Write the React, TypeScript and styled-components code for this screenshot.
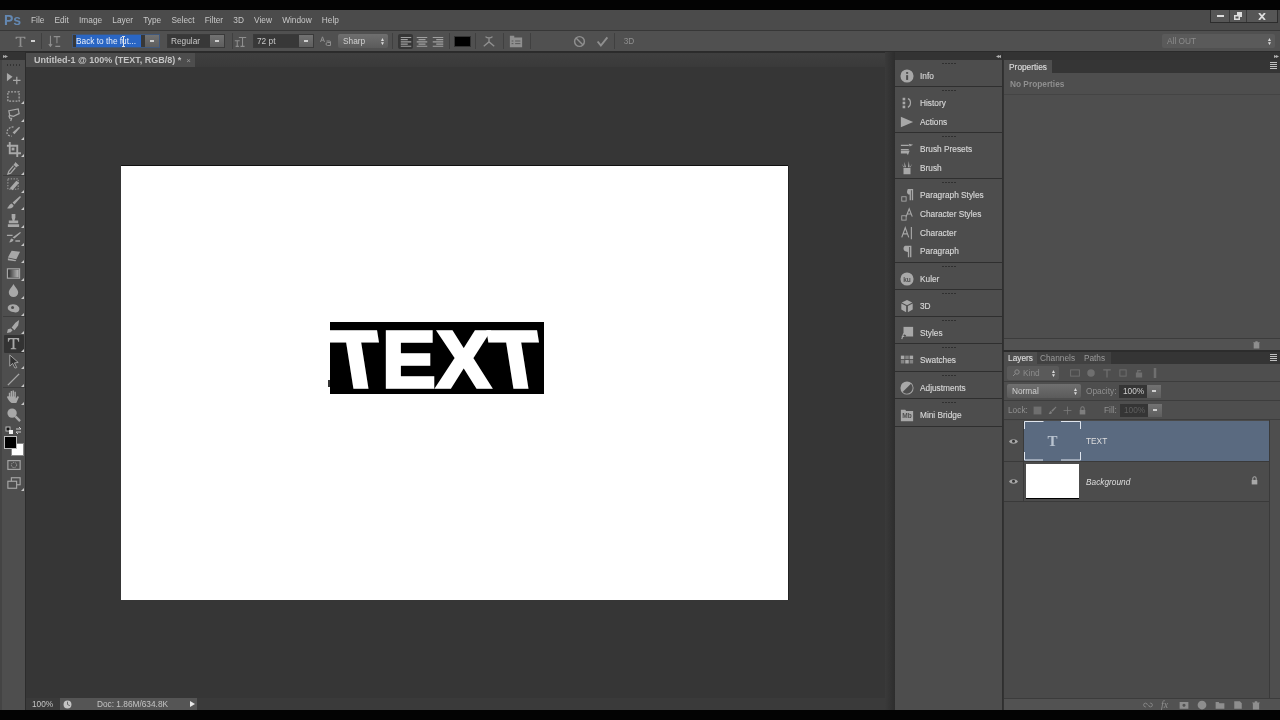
import React from "react";
import styled, { createGlobalStyle } from "styled-components";

const Global = createGlobalStyle`
  html, body { margin: 0; padding: 0; background: #000; }
  * { box-sizing: border-box; }
`;

const Page = styled.div`
  width: 1280px;
  height: 720px;
  overflow: hidden;
  display: flex;
  flex-direction: column;
  background: #000;
  font-family: "Liberation Sans", Arial, sans-serif;
  font-size: 8.3px;
  color: #cfcfcf;
  filter: blur(0.3px);
`;
const Letterbox = styled.div`
  height: 10px;
  flex: none;
  background: #030303;
`;
const MenuBar = styled.div`
  height: 20px;
  flex: none;
  display: flex;
  align-items: center;
  background: #4b4b4b;
  position: relative;
`;
const Logo = styled.div`
  width: 31px;
  padding-left: 4px;
  font-size: 14px;
  font-weight: 700;
  color: #6488b2;
`;
const MenuItems = styled.div`
  display: flex;
  gap: 10.2px;
  color: #c8c8c8;
`;
const WindowButtons = styled.div`
  position: absolute;
  right: 2px;
  top: 0;
  height: 13px;
  display: flex;
  border: 1px solid #2c2c2c;
  border-top: 0;
  background: #565656;
`;
const WindowButton = styled.div<{ $w: number }>`
  width: ${(p) => p.$w}px;
  display: flex;
  align-items: center;
  justify-content: center;
  border-left: 1px solid #3a3a3a;
  &:first-child { border-left: 0; }
`;
const OptionsBar = styled.div`
  height: 22px;
  flex: none;
  display: flex;
  align-items: center;
  background: #505050;
  border-top: 1px solid #373737;
  border-bottom: 1px solid #2b2b2b;
`;
const Slot = styled.div<{ $x: number; $w: number }>`
  flex: none;
  margin-left: ${(p) => p.$x}px;
  width: ${(p) => p.$w}px;
  height: 14px;
  display: flex;
  align-items: center;
  justify-content: center;
  color: #8f8f8f;
`;
const Sep = styled.div<{ $x: number }>`
  flex: none;
  margin-left: ${(p) => p.$x}px;
  width: 1px;
  height: 16px;
  background: #404040;
`;
const ComboBox = styled.div<{ $x: number; $w: number; $focus?: boolean }>`
  flex: none;
  margin-left: ${(p) => p.$x}px;
  width: ${(p) => p.$w}px;
  height: 14px;
  display: flex;
  position: relative;
  background: #383838;
  border: 1px solid ${(p) => (p.$focus ? "#41587a" : "#3a3a3a")};
  color: #c8c8c8;
`;
const ComboText = styled.div`
  flex: 1;
  padding-left: 3px;
  line-height: 12px;
  white-space: nowrap;
  overflow: hidden;
`;
const Selected = styled.span`
  background: #2a66c4;
  color: #e8eefa;
  display: inline-block;
  height: 12px;
  line-height: 12px;
  width: 65px;
`;
const IBeam = styled.span`
  position: absolute;
  left: 49px;
  top: 1px;
  width: 3px;
  height: 11px;
  border-top: 1px solid #ddd;
  border-bottom: 1px solid #ddd;
  background: linear-gradient(90deg, transparent 1px, #e8e8e8 1px 2px, transparent 2px);
`;
const ComboArrow = styled.div`
  flex: none;
  width: 14px;
  background: linear-gradient(#727272, #5e5e5e);
  display: flex;
  align-items: center;
  justify-content: center;
`;
const ArrowMark = styled.span`
  width: 4px;
  height: 2px;
  background: #cfcfcf;
`;
const Select = styled.div<{ $x: number; $w: number; $muted?: boolean }>`
  flex: none;
  margin-left: ${(p) => p.$x}px;
  width: ${(p) => p.$w}px;
  height: 14px;
  display: flex;
  align-items: center;
  justify-content: space-between;
  padding: 0 3px 0 5px;
  border-radius: 2px;
  background: ${(p) => (p.$muted ? "#5a5a5a" : "linear-gradient(#6f6f6f, #5b5b5b)")};
  color: ${(p) => (p.$muted ? "#8c8c8c" : "#d0d0d0")};
`;
const SelectLabel = styled.span`
  display: flex;
  align-items: center;
  gap: 3px;
`;
const UpDown = styled.span`
  font-size: 5px;
  line-height: 4px;
  width: 5px;
  text-align: center;
  color: #d8d8d8;
`;
const AlignButton = styled.div<{ $x: number; $active?: boolean }>`
  flex: none;
  margin-left: ${(p) => p.$x}px;
  width: 15px;
  height: 15px;
  display: flex;
  align-items: center;
  justify-content: center;
  border-radius: 2px;
  background: ${(p) => (p.$active ? "#363636" : "transparent")};
  color: #a0a0a0;
`;
const Swatch = styled.div<{ $x: number }>`
  flex: none;
  margin-left: ${(p) => p.$x}px;
  width: 17px;
  height: 11px;
  background: #000;
  border: 1px solid #333;
`;
const Workspace = styled.div`
  flex: 1;
  min-height: 0;
  display: flex;
`;
const ToolColumn = styled.div`
  flex: none;
  width: 26px;
  display: flex;
  flex-direction: column;
  align-items: center;
  background: #4e4e4e;
  border-left: 2px solid #444;
  border-right: 1px solid #2c2c2c;
`;
const ToolHeader = styled.div`
  align-self: stretch;
  height: 8px;
  margin-left: -2px;
  background: #333;
  color: #aaa;
  font-size: 6px;
  line-height: 8px;
  padding-left: 3px;
  letter-spacing: -1px;
`;
const ToolGrip = styled.div`
  width: 14px;
  height: 9px;
  margin-bottom: 1px;
  background: repeating-linear-gradient(90deg, #333 0 1px, transparent 1px 3px) center / 14px 2px no-repeat;
`;
const Tool = styled.div<{ $active?: boolean; $flyout?: boolean }>`
  position: relative;
  width: 20px;
  height: 17.68px;
  flex: none;
  display: flex;
  align-items: center;
  justify-content: center;
  color: #a8a8a8;
  border-radius: 1px;
  background: ${(p) => (p.$active ? "#333" : "transparent")};
  &::after {
    content: "";
    display: ${(p) => (p.$flyout ? "block" : "none")};
    position: absolute;
    right: 0;
    bottom: 1px;
    border-left: 3px solid transparent;
    border-bottom: 3px solid #c8c8c8;
  }
`;
const ToolRule = styled.div`
  width: 22px;
  height: 1px;
  flex: none;
  margin: -1px 0 0;
  background: #3d3d3d;
`;
const ColorBox = styled.div`
  position: relative;
  width: 20px;
  height: 20px;
  flex: none;
  margin-top: 1px;
`;
const Background = styled.div`
  position: absolute;
  left: 7px;
  top: 7px;
  width: 13px;
  height: 13px;
  background: #fff;
  border: 1px solid #888;
`;
const Foreground = styled.div`
  position: absolute;
  left: 0;
  top: 0;
  width: 13px;
  height: 13px;
  background: #000;
  border: 1px solid #bbb;
`;
const SmallColors = styled.div`
  width: 20px;
  height: 10px;
  flex: none;
  margin-top: 2px;
  display: flex;
  align-items: center;
  justify-content: center;
`;
const DocumentColumn = styled.div`
  flex: 1;
  min-width: 0;
  display: flex;
  flex-direction: column;
  background: #363636;
`;
const TabRow = styled.div`
  height: 15px;
  flex: none;
  display: flex;
  align-items: flex-end;
  background: linear-gradient(#3f3f3f, #3a3a3a);
  border-top: 1px solid #2c2c2c;
`;
const DocTab = styled.div`
  width: 169px;
  height: 14px;
  display: flex;
  align-items: center;
  padding-left: 8px;
  background: #4d4d4d;
  font-weight: 700;
  color: #c4c4c4;
  font-size: 9px;
  gap: 5px;
  white-space: nowrap;
`;
const CloseMark = styled.span`
  color: #999;
  font-size: 8px;
  font-weight: 400;
`;
const Canvas = styled.div`
  flex: 1;
  min-height: 0;
  padding: 99px 0 0 95px;
`;
const Artboard = styled.div`
  position: relative;
  width: 667px;
  height: 434px;
  background: #fff;
  box-shadow: 0 -1px 0 #111, 1px 0 0 #222;
`;
const TypeSelection = styled.div`
  position: absolute;
  left: 209px;
  top: 156px;
  width: 214px;
  height: 72px;
  padding-top: 3px;
  background: #000;
  display: flex;
  justify-content: center;
  align-items: center;
  color: #fff;
  font-size: 80px;
  font-weight: 700;
  line-height: 69px;
  letter-spacing: 1.5px;
  -webkit-text-stroke: 3.5px #fff;
`;
const TypeCaret = styled.div`
  position: absolute;
  left: 207px;
  top: 214px;
  width: 2px;
  height: 7px;
  background: #333;
`;
const Glyph = styled.span<{ $skew?: number }>`
  display: inline-block;
  transform: skewX(${(p) => p.$skew ?? 0}deg);
`;
const StatusBar = styled.div`
  height: 12px;
  flex: none;
  display: flex;
  align-items: center;
  padding-left: 6px;
  color: #c4c4c4;
  background: #3a3a3a;
`;
const Zoom = styled.div`
  width: 28px;
`;
const StatusInfo = styled.div`
  width: 137px;
  height: 12px;
  display: flex;
  align-items: center;
  background: #555;
`;
const StatusIcon = styled.div`
  width: 37px;
  display: flex;
  justify-content: flex-start;
  padding-left: 3px;
`;
const StatusText = styled.div`
  flex: 1;
`;
const StatusArrow = styled.div`
  width: 0;
  height: 0;
  margin-right: 2px;
  border-left: 5px solid #e8e8e8;
  border-top: 3px solid transparent;
  border-bottom: 3px solid transparent;
`;
const Gutter = styled.div`
  flex: none;
  width: 10px;
  background: linear-gradient(90deg, #3a3a3a, #2d2d2d);
`;
const Dock = styled.div`
  flex: none;
  width: 108px;
  display: flex;
  flex-direction: column;
  background: #4d4d4d;
  border-right: 1px solid #2f2f2f;
`;
const CollapseBar = styled.div`
  height: 8px;
  flex: none;
  background: #333;
  color: #b0b0b0;
  font-size: 6px;
  line-height: 8px;
  text-align: right;
  padding-right: 2px;
  letter-spacing: -1px;
`;
const DockGroup = styled.div<{ $h: number }>`
  flex: none;
  height: ${(p) => p.$h}px;
  padding-top: 7px;
  border-bottom: 1px solid #2f2f2f;
  position: relative;
  &::before {
    content: "";
    position: absolute;
    top: 3px;
    left: 47px;
    width: 14px;
    height: 1px;
    background: repeating-linear-gradient(90deg, #2f2f2f 0 2px, transparent 2px 3px);
  }
`;
const DockRow = styled.div`
  height: 18.7px;
  display: flex;
  align-items: center;
  color: #d6d6d6;
  -webkit-text-stroke: 0.15px #d6d6d6;
`;
const DockIcon = styled.div`
  width: 25px;
  padding-right: 2px;
  display: flex;
  justify-content: center;
  color: #a8a8a8;
`;
const RightColumn = styled.div`
  flex: none;
  width: 277px;
  display: flex;
  flex-direction: column;
  background: #333;
`;
const Panel = styled.div<{ $h?: number }>`
  flex: ${(p) => (p.$h ? `none` : 1)};
  height: ${(p) => (p.$h ? `${p.$h}px` : "auto")};
  min-height: 0;
  display: flex;
  flex-direction: column;
  background: #4e4e4e;
  border-left: 1px solid #333;
`;
const PanelTabs = styled.div<{ $h: number }>`
  height: ${(p) => p.$h}px;
  flex: none;
  display: flex;
  align-items: stretch;
  background: #353535;
  position: relative;
`;
const PanelTab = styled.div<{ $w: number; $active?: boolean }>`
  width: ${(p) => p.$w}px;
  display: flex;
  align-items: center;
  justify-content: center;
  background: ${(p) => (p.$active ? "#4e4e4e" : "#414141")};
  color: ${(p) => (p.$active ? "#dcdcdc" : "#9a9a9a")};
  -webkit-text-stroke: ${(p) => (p.$active ? "0.15px #dcdcdc" : "0")};
`;
const PanelMenu = styled.div`
  position: absolute;
  right: 3px;
  top: 2px;
  width: 7px;
  height: 7px;
  background: repeating-linear-gradient(#c0c0c0 0 1px, transparent 1px 2px);
`;
const NoProps = styled.div`
  height: 22px;
  flex: none;
  display: flex;
  align-items: center;
  padding-left: 6px;
  color: #8f8f8f;
  font-weight: 700;
  border-bottom: 1px solid #444;
`;
const Grow = styled.div`
  flex: 1;
`;
const PanelFooter = styled.div<{ $h: number }>`
  height: ${(p) => p.$h}px;
  flex: none;
  display: flex;
  align-items: center;
  justify-content: flex-end;
  gap: 8px;
  padding-right: 19px;
  background: #525252;
  border-top: 1px solid #3c3c3c;
  color: #8e8e8e;
`;
const FxMark = styled.i`
  width: 10px;
  font-family: "Liberation Serif", serif;
  font-size: 10px;
  line-height: 10px;
`;
const Divider = styled.div`
  height: 2px;
  flex: none;
  background: #2c2c2c;
`;
const FilterRow = styled.div<{ $h: number }>`
  height: ${(p) => p.$h}px;
  flex: none;
  display: flex;
  align-items: center;
  padding-left: 3px;
  border-bottom: 1px solid #3d3d3d;
  color: #8c8c8c;
`;
const KindIcons = styled.div`
  display: flex;
  gap: 6px;
  margin-left: 11px;
  color: #6f6f6f;
`;
const FieldLabel = styled.div<{ $x: number; $w: number }>`
  flex: none;
  margin-left: ${(p) => p.$x}px;
  width: ${(p) => p.$w}px;
  color: #909090;
`;
const NumberField = styled.div<{ $muted?: boolean }>`
  width: 42px;
  height: 13px;
  display: flex;
  margin-left: 3px;
  background: #353535;
  color: ${(p) => (p.$muted ? "#5f5f5f" : "#cfcfcf")};
  line-height: 13px;
`;
const NumberText = styled.div`
  flex: 1;
  padding-left: 4px;
`;
const LockIcons = styled.div`
  display: flex;
  gap: 6px;
  margin-left: 5px;
  color: #7e7e7e;
`;
const LayerList = styled.div`
  flex: 1;
  min-height: 0;
  margin-right: 10px;
  padding-top: 1px;
  background: #4a4a4a;
  border-right: 1px solid #3a3a3a;
`;
const LayerRow = styled.div<{ $h: number }>`
  height: ${(p) => p.$h}px;
  display: flex;
  align-items: center;
  border-bottom: 1px solid #3a3a3a;
  background: #4c4c4c;
`;
const EyeCell = styled.div`
  width: 20px;
  height: 100%;
  flex: none;
  display: flex;
  align-items: center;
  justify-content: center;
  border-right: 1px solid #3a3a3a;
  color: #a8a8a8;
`;
const LayerBody = styled.div<{ $selected?: boolean }>`
  flex: 1;
  height: 100%;
  display: flex;
  align-items: center;
  background: ${(p) => (p.$selected ? "#5a6a80" : "transparent")};
  color: #dedede;
  position: relative;
`;
const TypeThumb = styled.div`
  width: 57px;
  height: 100%;
  flex: none;
  position: relative;
  display: flex;
  align-items: center;
  justify-content: center;
  font-family: "Liberation Serif", serif;
  font-size: 15px;
  font-weight: 700;
  color: #b9c3cf;
`;
const Corners = styled.svg`
  position: absolute;
  left: 0;
  top: 0;
`;
const ImageThumb = styled.div`
  width: 53px;
  height: 35px;
  flex: none;
  margin: 0 2px;
  background: #fff;
  border-bottom: 1px solid #000;
`;
const LayerName = styled.div<{ $italic?: boolean }>`
  margin-left: 5px;
  font-style: ${(p) => (p.$italic ? "italic" : "normal")};
`;
const LayerLock = styled.div`
  position: absolute;
  right: 10px;
  top: 14px;
  color: #a8a8a8;
`;

const Ico = ({ s = 14, children }: { s?: number; children: React.ReactNode }) => (
  <svg width={s} height={s} viewBox="0 0 16 16" fill="currentColor" stroke="none">
    {children}
  </svg>
);
const L = { fill: "none", stroke: "currentColor", strokeWidth: 1.3 } as const;
const IconWord = ({ children }: { children: string }) => (
  <text x="8" y="11" textAnchor="middle" fontSize="7.500" fontWeight="700" fontFamily="Liberation Sans, sans-serif" fill="#4d4d4d">
    {children}
  </text>
);

const tools: { i: React.ReactNode; f?: boolean; a?: boolean; rule?: boolean }[] = [
  { i: <><path d="M1 2l6 4-6 5z" /><path {...L} d="M11.500 6v8M7.500 10h8" /></> },
  { f: true, i: <rect x="2" y="3" width="12" height="10" fill="none" stroke="currentColor" strokeWidth="1.300" strokeDasharray="2 1.400" /> },
  { f: true, i: <path {...L} d="M3 4l10-2 1 5-6 3-4-1zM3 9l1 3 2 0-1 3" /> },
  { f: true, i: <><path d="M7 9l7-6 1 1-6 7z" /><path {...L} strokeDasharray="2 1.300" d="M8 3C4 3 1 6 1 9s3 4 5 4" /></> },
  { f: true, i: <><path {...L} strokeWidth="2" d="M4 0v12h12M1 4h11v12" /><rect x="6" y="6" width="3" height="3" /></> },
  { f: true, rule: true, i: <><path d="M10 2l4 4-2 1-1 1-3-3 1-1z" /><path {...L} d="M8 6l-5 6-1 3 3-1 5-6" /></> },
  { f: true, i: <><rect x="2" y="2" width="11" height="11" fill="none" stroke="currentColor" strokeDasharray="1.500 1.500" /><path d="M4 12l7-8 3 2-7 8z" /></> },
  { f: true, i: <path d="M15 1l1 1-7 8-2-2zM6 9l2 2c0 3-3 4-7 3 2-1 2-4 5-5z" /> },
  { f: true, i: <path d="M6 1h4v4l-1 3h4v3H3V8h4L6 5zM2 12h12v3H2z" /> },
  { f: true, i: <path d="M15 2l1 1-7 6-2-1zM6 9l2 1c0 2-2 3-5 3 2-1 1-3 3-4zM1 5l6 0v1.500H1zM10 11h5v1.500h-5z" /> },
  { f: true, i: <path d="M6 3l9 1-4 8-9-2zM2 11l9 2-1 1-8-1z" /> },
  { f: true, i: <><rect x="1.500" y="3" width="13" height="10" fill="none" stroke="currentColor" strokeWidth="1.200" /><defs><linearGradient id="gt"><stop offset="0" stopColor="#333" /><stop offset="1" stopColor="#bbb" /></linearGradient></defs><rect x="2.500" y="4" width="11" height="8" fill="url(#gt)" /></> },
  { f: true, i: <path d="M8 1c2 4 5 6 5 9a5 5 0 0 1-10 0c0-3 3-5 5-9z" /> },
  { f: true, rule: true, i: <><path d="M2 6c3-4 10-3 12 1 1 3-1 6-5 5S1 10 2 6z" /><circle cx="7" cy="7" r="1.600" fill="#4e4e4e" /></> },
  { f: true, i: <path d="M14 1l-1 6-4 5-3-3 4-5zM5 10l2 2-2 2-4 1 1-4z" /> },
  { f: true, a: true, i: <path d="M2 2h12v4h-1c-.3-2-1-2.600-3-2.600H9V12c0 1 .6 1.200 2 1.200v1H5v-1c1.400 0 2-.2 2-1.200V3.400H6C4 3.400 3.300 4 3 6H2z" /> },
  { f: true, i: <path d="M4 1l9 8-4 .5 2.500 5-2 .5-2.500-5L4 13z" fill="#333" stroke="currentColor" /> },
  { f: true, rule: true, i: <path {...L} strokeWidth="1.500" d="M2 14L14 2" /> },
  { f: true, i: <path d="M3 8V4h1.500v4h.5V2h1.500v6h.5V1.500H8.500V8H9V3h1.500v7l2-2.500 1.300 1L11 15H6C4 14 2 11 1 8.500L2 7.500z" /> },
  { i: <><circle cx="6.500" cy="6.500" r="5" /><path {...L} strokeWidth="2.500" d="M10 10l5 5" /></> },
];

const AlignLines = ({ v }: { v: 0 | 1 | 2 }) => {
  const short = v === 0 ? "M2 6.500h8M2 11.500h8" : v === 1 ? "M4 6.500h8M4 11.500h8" : "M6 6.500h8M6 11.500h8";
  return (
    <Ico s={14}>
      <path {...L} d={`M2 4h12M2 9h12M2 14h12 ${short}`} />
    </Ico>
  );
};

const dockGroups: { h: number; rows: { label: string; icon: React.ReactNode }[] }[] = [
  { h: 27, rows: [{ label: "Info", icon: <><circle cx="8" cy="8" r="7.500" /><rect x="7" y="7" width="2.300" height="5.500" fill="#4d4d4d" /><rect x="7" y="3.500" width="2.300" height="2" fill="#4d4d4d" /></> }] },
  { h: 46, rows: [
    { label: "History", icon: <><rect x="3" y="2" width="3" height="3" /><rect x="3" y="6.500" width="3" height="3" /><rect x="3" y="11" width="3" height="3" /><path {...L} d="M9 3c4 1 4 8 0 10" /></> },
    { label: "Actions", icon: <path d="M1 2l14 6-14 6z" /> },
  ] },
  { h: 46, rows: [
    { label: "Brush Presets", icon: <path d="M1 3h9v1.500H1zM10 2l5 1-4 2zM1 8h9v1.500H1zM1 10h10l-2 5-1-2H1z" /> },
    { label: "Brush", icon: <path d="M4 8h8v7H4zM5 1l2 6H5zM10 0l1 7H9zM2 3l3 4H4zM14 3l-2 4h-1z" /> },
  ] },
  { h: 84, rows: [
    { label: "Paragraph Styles", icon: <><path d="M9 1h6v13h-1.500V2.500h-1V14H11V7.500C9 7.500 8 6 8 4.500S9 1 9 1z" /><rect x="2" y="10" width="5" height="5" fill="none" stroke="currentColor" /></> },
    { label: "Character Styles", icon: <><path {...L} d="M7 11l3.500-9L14 11M8.200 8h4.600" /><rect x="2" y="10" width="5" height="5" fill="none" stroke="currentColor" /></> },
    { label: "Character", icon: <><path {...L} d="M2 13l4-11 4 11M3.500 9h5" /><path {...L} d="M13 1v14" /></> },
    { label: "Paragraph", icon: <path d="M6 2h7v13h-1.500V3.500h-1V15H9V9C6 9 4 7.500 4 5.500S5 2 6 2z" /> },
  ] },
  { h: 27, rows: [{ label: "Kuler", icon: <><circle cx="8" cy="8" r="7.500" /><IconWord>ku</IconWord></> }] },
  { h: 27, rows: [{ label: "3D", icon: <path d="M8 1l6 3-6 3-6-3zM1.500 5L7 8v7l-5.500-3zM14.500 5L9 8v7l5.500-3z" /> }] },
  { h: 27, rows: [{ label: "Styles", icon: <><rect x="4" y="1" width="11" height="11" /><path {...L} stroke="#4d4d4d" strokeWidth="3" d="M1 15l5-5" /><path {...L} d="M2 15l2-6h3M2 12h3" /></> }] },
  { h: 28, rows: [{ label: "Swatches", icon: <><rect x="1" y="3" width="4" height="4" /><rect x="6" y="3" width="4" height="4" opacity=".6" /><rect x="11" y="3" width="4" height="4" /><rect x="1" y="8" width="4" height="4" opacity=".6" /><rect x="6" y="8" width="4" height="4" /><rect x="11" y="8" width="4" height="4" opacity=".6" /></> }] },
  { h: 27, rows: [{ label: "Adjustments", icon: <><circle cx="8" cy="8" r="7.500" /><path d="M3 12.500L12.500 3A6.500 6.500 0 0 1 3 12.500z" fill="#4d4d4d" /></> }] },
  { h: 28, rows: [{ label: "Mini Bridge", icon: <><path d="M1 2h5l1 1.500h8V15H1z" /><IconWord>Mb</IconWord></> }] },
];

const Eye = () => (
  <svg width="9" height="7" viewBox="0 0 9 7">
    <path d="M0 3.500C2 .5 7 .5 9 3.500 7 6.500 2 6.500 0 3.500z" fill="currentColor" />
    <circle cx="4.500" cy="3.200" r="1.500" fill="#333" />
  </svg>
);
const Padlock = () => (
  <Ico s={9}>
    <path d="M3 7h10v8H3z" />
    <path {...L} strokeWidth="1.800" d="M5 7V4.500a3 3 0 0 1 6 0V7" />
  </Ico>
);

export default function App() {
  return (
    <Page>
      <Global />
      <Letterbox />
      <MenuBar>
        <Logo>Ps</Logo>
        <MenuItems>
          {["File", "Edit", "Image", "Layer", "Type", "Select", "Filter", "3D", "View", "Window", "Help"].map((m) => (
            <span key={m}>{m}</span>
          ))}
        </MenuItems>
        <WindowButtons>
          <WindowButton $w={18}>
            <svg width="7" height="2"><rect width="7" height="2" fill="#ddd" /></svg>
          </WindowButton>
          <WindowButton $w={17}>
            <svg width="8" height="8"><path d="M3 0h5v5H6v3H0V3h3z" fill="#ddd" /><path d="M1.500 4.500h3v2h-3z" fill="#555" /></svg>
          </WindowButton>
          <WindowButton $w={31}>
            <svg width="8" height="7"><path d="M1 0l6 7M7 0L1 7" stroke="#ddd" strokeWidth="1.800" /></svg>
          </WindowButton>
        </WindowButtons>
      </MenuBar>
      <OptionsBar>
        <Slot $x={13} $w={14}>
          <Ico s={13}><path d="M2 2h12v3h-1c-.3-1-1-1.600-3-1.600H9V13c0 .6.600.8 1.500.8v.7h-5v-.7c.9 0 1.500-.2 1.500-.8V3.400H6C4 3.400 3.300 4 3 5H2z" /></Ico>
        </Slot>
        <Slot $x={2} $w={8}><ArrowMark /></Slot>
        <Sep $x={4} />
        <Slot $x={5} $w={14}>
          <Ico s={13}><path {...L} d="M7 2h8M11 2v8M9 14h6M3 1v12M1 11l2 3 2-3" /></Ico>
        </Slot>
        <ComboBox $x={11} $w={88} $focus>
          <ComboText><Selected>Back to the fut...</Selected></ComboText>
          <ComboArrow><ArrowMark /></ComboArrow>
          <IBeam />
        </ComboBox>
        <ComboBox $x={7} $w={58}>
          <ComboText>Regular</ComboText>
          <ComboArrow><ArrowMark /></ComboArrow>
        </ComboBox>
        <Sep $x={7} />
        <Slot $x={0} $w={14}>
          <Ico s={13}><path {...L} d="M6 3h9M10.500 3v11M8 14h5M1 7h6M4 7v7M2 14h4" /></Ico>
        </Slot>
        <ComboBox $x={6} $w={61}>
          <ComboText>72 pt</ComboText>
          <ComboArrow><ArrowMark /></ComboArrow>
        </ComboBox>
        <Slot $x={5} $w={14}>
          <svg width="12" height="10" viewBox="0 0 12 10"><path {...L} strokeWidth="1" d="M.5 6L2.500.8 4.500 6M1.200 4.200h2.600" /><path {...L} strokeWidth="1" d="M6.500 5h3a1 1 0 0 1 1 1v3.500h-3a1.500 1.500 0 0 1 0-3h3" /></svg>
        </Slot>
        <Select $x={5} $w={50}>
          Sharp<UpDown>▲<br />▼</UpDown>
        </Select>
        <Sep $x={4} />
        <AlignButton $x={5} $active><AlignLines v={0} /></AlignButton>
        <AlignButton $x={1}><AlignLines v={1} /></AlignButton>
        <AlignButton $x={1}><AlignLines v={2} /></AlignButton>
        <Sep $x={4} />
        <Swatch $x={4} />
        <Sep $x={4} />
        <Slot $x={6} $w={14}>
          <Ico s={14}><path {...L} strokeWidth="1.500" d="M4 3c2 2 6 2 8 0M8 4v5M8 9l-6 5M8 9l6 5" /></Ico>
        </Slot>
        <Sep $x={7} />
        <Slot $x={5} $w={14}>
          <Ico s={14}><path d="M1 2h5v2h9v11H1z" /><path stroke="#505050" d="M3 8h2M7 8h6M3 11h2M7 11h6" /></Ico>
        </Slot>
        <Sep $x={7} />
        <Slot $x={41} $w={14}>
          <Ico s={13}><circle cx="8" cy="8" r="6" {...L} strokeWidth="1.800" /><path {...L} strokeWidth="1.800" d="M4 4l8 8" /></Ico>
        </Slot>
        <Slot $x={9} $w={14}>
          <Ico s={13}><path {...L} strokeWidth="2.400" d="M2 8l4 5 8-10" /></Ico>
        </Slot>
        <Sep $x={5} />
        <Slot $x={7} $w={14}>3D</Slot>
        <Select $x={526} $w={113} $muted>
          All OUT<UpDown>▲<br />▼</UpDown>
        </Select>
      </OptionsBar>
      <Workspace>
        <ToolColumn>
          <ToolHeader>▸▸</ToolHeader>
          <ToolGrip />
          {tools.map((t, i) => (
            <React.Fragment key={i}>
              <Tool $flyout={t.f} $active={t.a}>
                <Ico s={15}>{t.i}</Ico>
              </Tool>
              {t.rule && <ToolRule />}
            </React.Fragment>
          ))}
          <SmallColors>
            <svg width="18" height="9" viewBox="0 0 18 9">
              <rect x="1" y="1" width="4" height="4" fill="#111" stroke="#bbb" />
              <rect x="4" y="4" width="4" height="4" fill="#eee" />
              <path d="M11 3h5l-2-2M16 6h-5l2 2" fill="none" stroke="#ccc" />
            </svg>
          </SmallColors>
          <ColorBox>
            <Background />
            <Foreground />
          </ColorBox>
          <Tool>
            <Ico s={14}><rect x="1" y="3" width="14" height="10" fill="none" stroke="currentColor" strokeWidth="1.300" /><circle cx="8" cy="8" r="3" strokeDasharray="1.500 1" fill="none" stroke="currentColor" /></Ico>
          </Tool>
          <Tool $flyout>
            <Ico s={14}><rect x="5" y="2" width="10" height="8" fill="none" stroke="currentColor" strokeWidth="1.300" /><rect x="1" y="6" width="10" height="8" fill="#4e4e4e" stroke="currentColor" strokeWidth="1.300" /></Ico>
          </Tool>
        </ToolColumn>
        <DocumentColumn>
          <TabRow>
            <DocTab>
              Untitled-1 @ 100% (TEXT, RGB/8) *
              <CloseMark>×</CloseMark>
            </DocTab>
          </TabRow>
          <Canvas>
            <Artboard>
              <TypeSelection>
                <Glyph $skew={9}>T</Glyph>
                <Glyph>E</Glyph>
                <Glyph>X</Glyph>
                <Glyph $skew={9}>T</Glyph>
              </TypeSelection>
              <TypeCaret />
            </Artboard>
          </Canvas>
          <StatusBar>
            <Zoom>100%</Zoom>
            <StatusInfo>
              <StatusIcon>
                <Ico s={9}><circle cx="8" cy="8" r="7" /><path d="M8 3v5l4 2" stroke="#555" fill="none" strokeWidth="1.500" /></Ico>
              </StatusIcon>
              <StatusText>Doc: 1.86M/634.8K</StatusText>
              <StatusArrow />
            </StatusInfo>
          </StatusBar>
        </DocumentColumn>
        <Gutter />
        <Dock>
          <CollapseBar>◂◂</CollapseBar>
          {dockGroups.map((g) => (
            <DockGroup key={g.rows[0].label} $h={g.h}>
              {g.rows.map((r) => (
                <DockRow key={r.label}>
                  <DockIcon><Ico s={14}>{r.icon}</Ico></DockIcon>
                  {r.label}
                </DockRow>
              ))}
            </DockGroup>
          ))}
        </Dock>
        <RightColumn>
          <CollapseBar>▸▸</CollapseBar>
          <Panel $h={290}>
            <PanelTabs $h={13}>
              <PanelTab $w={48} $active>Properties</PanelTab>
              <PanelMenu />
            </PanelTabs>
            <NoProps>No Properties</NoProps>
            <Grow />
            <PanelFooter $h={12}>
              <Ico s={9}><path d="M2 4h12v1H2zM6 2h4v2H6zM3 5h10v10H3z" /></Ico>
            </PanelFooter>
          </Panel>
          <Divider />
          <Panel>
            <PanelTabs $h={12}>
              <PanelTab $w={33} $active>Layers</PanelTab>
              <PanelTab $w={41}>Channels</PanelTab>
              <PanelTab $w={33}>Paths</PanelTab>
              <PanelMenu />
            </PanelTabs>
            <FilterRow $h={18}>
              <Select $x={0} $w={52} $muted>
                <SelectLabel>
                  <svg width="8" height="8" viewBox="0 0 8 8"><circle cx="5" cy="3" r="2.200" fill="none" stroke="currentColor" /><path d="M3.400 4.600L1 7" stroke="currentColor" /></svg>
                  Kind
                </SelectLabel>
                <UpDown>▲<br />▼</UpDown>
              </Select>
              <KindIcons>
                <Ico s={10}><rect x="1" y="3" width="14" height="10" fill="none" stroke="currentColor" strokeWidth="1.500" /></Ico>
                <Ico s={10}><circle cx="8" cy="8" r="6" /></Ico>
                <Ico s={10}><path {...L} strokeWidth="2" d="M2 3h12M8 3v12" /></Ico>
                <Ico s={10}><rect x="3" y="3" width="10" height="10" fill="none" stroke="currentColor" strokeWidth="1.500" /></Ico>
                <Ico s={10}><path d="M3 7h10v8H3zM5 7V3h6v2H7v2z" /></Ico>
                <Ico s={10}><rect x="6" y="0" width="4" height="16" /></Ico>
              </KindIcons>
            </FilterRow>
            <FilterRow $h={19}>
              <Select $x={0} $w={74}>
                Normal<UpDown>▲<br />▼</UpDown>
              </Select>
              <FieldLabel $x={5} $w={30}>Opacity:</FieldLabel>
              <NumberField>
                <NumberText>100%</NumberText>
                <ComboArrow><ArrowMark /></ComboArrow>
              </NumberField>
            </FilterRow>
            <FilterRow $h={19}>
              <FieldLabel $x={1} $w={20}>Lock:</FieldLabel>
              <LockIcons>
                <Ico s={9}><rect x="1" y="1" width="14" height="14" opacity=".7" /></Ico>
                <Ico s={9}><path d="M14 1l1 1-7 8-2-2zM5 9l2 2c0 3-3 4-6 3 2-1 1-4 4-5z" /></Ico>
                <Ico s={9}><path {...L} d="M8 1v14M1 8h14" /></Ico>
                <Padlock />
              </LockIcons>
              <FieldLabel $x={17} $w={13}>Fill:</FieldLabel>
              <NumberField $muted>
                <NumberText>100%</NumberText>
                <ComboArrow><ArrowMark /></ComboArrow>
              </NumberField>
            </FilterRow>
            <LayerList>
              <LayerRow $h={41}>
                <EyeCell><Eye /></EyeCell>
                <LayerBody $selected>
                  <TypeThumb>
                    T
                    <Corners width="57" height="40" viewBox="0 0 57 40" fill="none" stroke="#dfe5ee">
                      <path d="M.5 8V.5h19M37 .5h19.500V8M56.500 31v8H37M19 39H.5v-8" />
                    </Corners>
                  </TypeThumb>
                  <LayerName>TEXT</LayerName>
                </LayerBody>
              </LayerRow>
              <LayerRow $h={40}>
                <EyeCell><Eye /></EyeCell>
                <LayerBody>
                  <ImageThumb />
                  <LayerName $italic>Background</LayerName>
                  <LayerLock><Padlock /></LayerLock>
                </LayerBody>
              </LayerRow>
            </LayerList>
            <PanelFooter $h={12}>
              <Ico s={10}><path {...L} d="M7 8a3 3 0 1 0-3 3h1M9 8a3 3 0 1 0 3-3h-1" /></Ico>
              <FxMark>fx</FxMark>
              <Ico s={10}><path fillRule="evenodd" d="M1 3h14v11H1zM8 6a2.500 2.500 0 1 0 .01 0z" /></Ico>
              <Ico s={10}><circle cx="8" cy="8" r="7" /></Ico>
              <Ico s={10}><path d="M1 3h5l1 2h8v9H1z" /></Ico>
              <Ico s={10}><path d="M2 2h9l3 3v9H2z" /></Ico>
              <Ico s={10}><path d="M2 4h12v1H2zM6 2h4v2H6zM3 5h10v10H3z" /></Ico>
            </PanelFooter>
          </Panel>
        </RightColumn>
      </Workspace>
      <Letterbox />
    </Page>
  );
}
